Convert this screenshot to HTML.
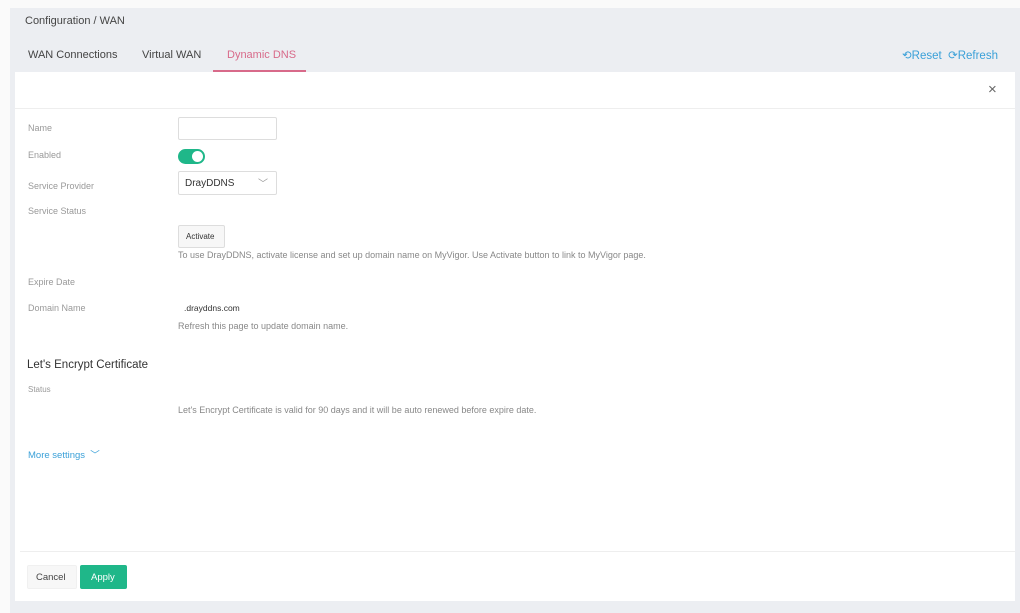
<!DOCTYPE html>
<html><head><style>
*{margin:0;padding:0;box-sizing:border-box}
body{width:1020px;height:613px;background:#fafafa;font-family:"Liberation Sans",sans-serif;position:relative;overflow:hidden}
.outer{position:absolute;left:10px;top:8px;width:1010px;height:605px;background:#eceef2}
.panel{position:absolute;left:15px;top:72px;width:1000px;height:529px;background:#fff}
.t{position:absolute;white-space:nowrap}
.lbl{font-size:9px;color:#999}
.box{position:absolute;border:1px solid #ddd;border-radius:2px;background:#fff}
</style></head><body>
<div class="outer"></div>
<div class="t" style="left:25px;top:15px;font-size:11px;color:#444">Configuration / WAN</div>
<div class="t" style="left:28px;top:49px;font-size:11px;color:#444">WAN Connections</div>
<div class="t" style="left:142px;top:49px;font-size:11px;color:#444">Virtual WAN</div>
<div class="t" style="left:227px;top:49px;font-size:11px;color:#d86a8a">Dynamic DNS</div>
<div style="position:absolute;left:213px;top:70px;width:93px;height:2px;background:#d86a8a"></div>
<div class="t" style="left:902px;top:48px;font-size:11.5px;color:#3aa0d8">⟲Reset &nbsp;⟳Refresh</div>
<div class="panel"></div>
<div style="position:absolute;left:15px;top:108px;width:1000px;height:1px;background:#eee"></div>
<div class="t" style="left:988px;top:81px;font-size:15px;color:#666">×</div>
<div class="t lbl" style="left:28px;top:123px">Name</div>
<div class="box" style="left:178px;top:117px;width:99px;height:23px"></div>
<div class="t lbl" style="left:28px;top:150px">Enabled</div>
<div style="position:absolute;left:178px;top:149px;width:27px;height:15px;border-radius:8px;background:#1fb789"><div style="position:absolute;right:2px;top:2px;width:11px;height:11px;border-radius:50%;background:#fff"></div></div>
<div class="t lbl" style="left:28px;top:181px">Service Provider</div>
<div class="box" style="left:178px;top:171px;width:99px;height:24px"></div>
<div class="t" style="left:185px;top:178px;font-size:10px;color:#333">DrayDDNS</div>
<div class="t" style="left:258px;top:175px;font-size:10px;color:#999">﹀</div>
<div class="t lbl" style="left:28px;top:206px">Service Status</div>
<div class="box" style="left:178px;top:225px;width:47px;height:23px;background:#f7f7f7"></div>
<div class="t" style="left:186px;top:232px;font-size:8px;color:#333">Activate</div>
<div class="t" style="left:178px;top:250px;font-size:9px;color:#888">To use DrayDDNS, activate license and set up domain name on MyVigor. Use Activate button to link to MyVigor page.</div>
<div class="t lbl" style="left:28px;top:277px">Expire Date</div>
<div class="t lbl" style="left:28px;top:303px">Domain Name</div>
<div class="t" style="left:184px;top:303px;font-size:8.5px;color:#333">.drayddns.com</div>
<div class="t" style="left:178px;top:321px;font-size:9px;color:#888">Refresh this page to update domain name.</div>
<div class="t" style="left:27px;top:359px;font-size:11.5px;color:#333">Let's Encrypt Certificate</div>
<div class="t lbl" style="left:28px;top:385px;font-size:8px">Status</div>
<div class="t" style="left:178px;top:405px;font-size:9px;color:#888">Let's Encrypt Certificate is valid for 90 days and it will be auto renewed before expire date.</div>
<div class="t" style="left:28px;top:447px;font-size:9.5px;color:#3aa0d8">More settings &nbsp;﹀</div>
<div style="position:absolute;left:20px;top:551px;width:995px;height:1px;background:#eee"></div>
<div class="box" style="left:27px;top:565px;width:50px;height:24px;background:#f7f7f7;border-color:#f0f0f0"></div>
<div class="t" style="left:36px;top:572px;font-size:9.5px;color:#444">Cancel</div>
<div style="position:absolute;left:80px;top:565px;width:47px;height:24px;background:#1fb789;border-radius:2px"></div>
<div class="t" style="left:91px;top:572px;font-size:9.5px;color:#fff">Apply</div>
</body></html>
